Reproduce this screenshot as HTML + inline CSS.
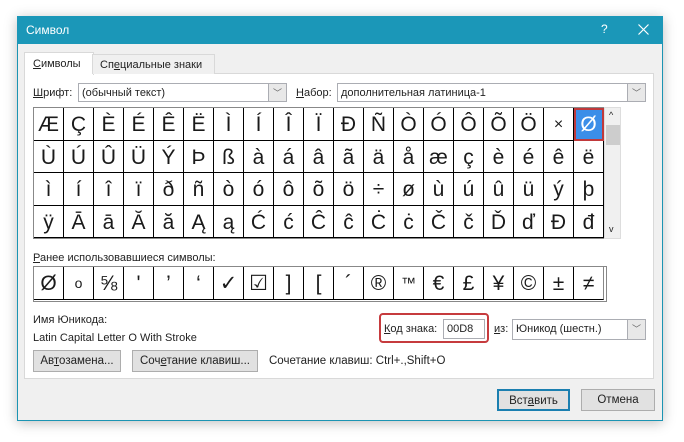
<!DOCTYPE html><html><head><meta charset="utf-8"><style>
body{margin:0;width:684px;height:442px;background:#fff;font-family:"Liberation Sans","DejaVu Sans",sans-serif;font-size:11px;color:#222;position:relative;overflow:hidden}
.a{position:absolute}
.dlg{left:17px;top:16px;width:644px;height:403px;background:#f0f0f0;border:1px solid #1b94b3;box-shadow:0 2px 12px rgba(0,0,0,.25)}
.title{left:17px;top:16px;width:646px;height:28px;background:#1b97b8;color:#fff;font-size:12px}
.sel{background:#fff;border:1px solid #abadb3;height:19px;line-height:19px;padding-left:3px;box-sizing:border-box}
.dd{position:absolute;right:0;top:0;width:17px;height:17px;border-left:1px solid #abadb3;background:#e8e8e8;font-size:9px;text-align:center;color:#666}
.grid{display:grid;grid-template-columns:repeat(19,30px);background:#fff;border:1px solid #888;box-sizing:border-box}
.grid div{height:32.5px;border-right:1px solid #000;border-bottom:1px solid #000;font-size:21px;text-align:center;line-height:33px;box-sizing:border-box;color:#1a1a1a;font-weight:300}
.btn{background:#e1e1e1;border:1px solid #adadad;height:22px;line-height:20px;text-align:center;box-sizing:border-box;font-size:11.5px}
u{text-decoration:underline}
</style></head><body>
<div class="a dlg"></div>
<div class="a title"><span class="a" style="left:9px;top:7px">Символ</span><span class="a" style="left:584px;top:6px">?</span><svg class="a" style="left:621px;top:8px" width="11" height="11"><path d="M0.5 0.5L10.5 10.5M10.5 0.5L0.5 10.5" stroke="#fff" stroke-width="1.2"/></svg></div>
<div class="a" style="left:24px;top:73px;width:630px;height:306px;background:#fff;border:1px solid #d9d9d9;box-sizing:border-box"></div>
<div class="a" style="left:24px;top:52px;width:68px;height:22px;background:#fff;border:1px solid #d9d9d9;border-bottom:none"><span class="a" style="left:8px;top:5px"><u>С</u>имволы</span></div>
<div class="a" style="left:92px;top:54px;width:121px;height:19px;background:#f0f0f0;border:1px solid #d9d9d9;border-bottom:none"><span class="a" style="left:7px;top:4px">Сп<u>е</u>циальные знаки</span></div>
<span class="a" style="left:33px;top:87px"><u>Ш</u>рифт:</span>
<div class="a sel" style="left:78px;top:83px;width:209px">(обычный текст)<span class="dd">﹀</span></div>
<span class="a" style="left:296px;top:87px"><u>Н</u>абор:</span>
<div class="a sel" style="left:337px;top:83px;width:309px">дополнительная латиница-1<span class="dd">﹀</span></div>
<div class="a grid" style="left:33px;top:107px;width:571px;height:132px">
<div>Æ</div><div>Ç</div><div>È</div><div>É</div><div>Ê</div><div>Ë</div><div>Ì</div><div>Í</div><div>Î</div><div>Ï</div><div>Ð</div><div>Ñ</div><div>Ò</div><div>Ó</div><div>Ô</div><div>Õ</div><div>Ö</div><div style="font-size:16px">×</div><div style="background:#3b8ee8;color:#fff;outline:2px solid #c0393b;outline-offset:-2px">Ø</div>
<div>Ù</div><div>Ú</div><div>Û</div><div>Ü</div><div>Ý</div><div>Þ</div><div>ß</div><div>à</div><div>á</div><div>â</div><div>ã</div><div>ä</div><div>å</div><div>æ</div><div>ç</div><div>è</div><div>é</div><div>ê</div><div>ë</div>
<div>ì</div><div>í</div><div>î</div><div>ï</div><div>ð</div><div>ñ</div><div>ò</div><div>ó</div><div>ô</div><div>õ</div><div>ö</div><div>÷</div><div>ø</div><div>ù</div><div>ú</div><div>û</div><div>ü</div><div>ý</div><div>þ</div>
<div>ÿ</div><div>Ā</div><div>ā</div><div>Ă</div><div>ă</div><div>Ą</div><div>ą</div><div>Ć</div><div>ć</div><div>Ĉ</div><div>ĉ</div><div>Ċ</div><div>ċ</div><div>Č</div><div>č</div><div>Ď</div><div>ď</div><div>Đ</div><div>đ</div>
</div>
<div class="a" style="left:604px;top:107px;width:17px;height:132px;background:#f0f0f0;border:1px solid #ddd;box-sizing:border-box"><span class="a" style="left:4px;top:2px;font-size:9px">^</span><div class="a" style="left:1px;top:17px;width:14px;height:20px;background:#cdcdcd"></div><span class="a" style="left:4px;top:116px;font-size:9px">v</span></div>
<span class="a" style="left:33px;top:252px"><u>Р</u>анее использовавшиеся символы:</span>
<div class="a grid" style="left:33px;top:266px;width:574px;height:36px;grid-template-columns:repeat(19,30px)">
<div>Ø</div><div style="font-size:14px">o</div><div>⅝</div><div>'</div><div>’</div><div>‘</div><div>✓</div><div>☑</div><div>]</div><div>[</div><div>´</div><div>®</div><div style="font-size:15px">™</div><div>€</div><div>£</div><div>¥</div><div>©</div><div>±</div><div style="border-right:1px solid #888">≠</div>
</div>
<span class="a" style="left:33px;top:314px">Имя Юникода:</span>
<span class="a" style="left:33px;top:332px">Latin Capital Letter O With Stroke</span>
<div class="a" style="left:379px;top:313px;width:110px;height:30px;border:2px solid #c63b3e;border-radius:4px;box-sizing:border-box"></div>
<span class="a" style="left:384px;top:323px"><u>К</u>од знака:</span>
<div class="a sel" style="left:443px;top:319px;width:42px;height:20px">00D8</div>
<span class="a" style="left:494px;top:323px"><u>и</u>з:</span>
<div class="a sel" style="left:512px;top:319px;width:134px;height:21px">Юникод (шестн.)<span class="dd" style="height:19px">﹀</span></div>
<div class="a btn" style="left:33px;top:350px;width:88px">Ав<u>т</u>озамена...</div>
<div class="a btn" style="left:132px;top:350px;width:126px">Соч<u>е</u>тание клавиш...</div>
<span class="a" style="left:269px;top:355px;font-size:11.5px">Сочетание клавиш: Ctrl+.,Shift+O</span>
<div class="a btn" style="left:497px;top:389px;width:73px;border:2px solid #1b7fb0">Вст<u>а</u>вить</div>
<div class="a btn" style="left:581px;top:389px;width:74px">Отмена</div>
</body></html>
